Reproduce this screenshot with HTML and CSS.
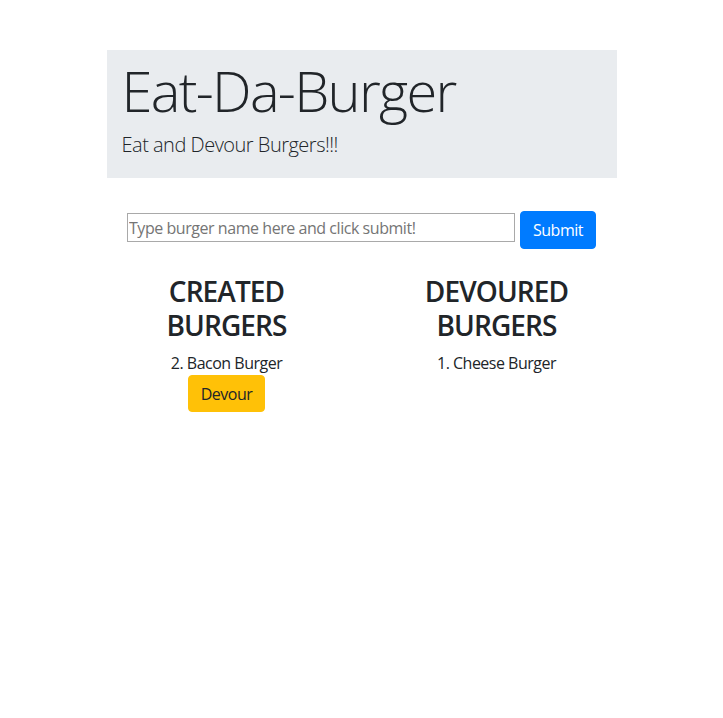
FILE: index.html
```html
<!DOCTYPE html>
<html lang="en">
<head>
<meta charset="utf-8">
<title>Eat-Da-Burger</title>
<link rel="stylesheet" href="styles.css">
</head>
<body>
<div class="container">
  <div class="jumbotron">
    <h1 class="title">Eat-Da-Burger</h1>
    <p class="lead">Eat and Devour Burgers!!!</p>
  </div>
  <form class="add-form">
    <input class="burger-input" type="text" placeholder="Type burger name here and click submit!">
    <button class="btn btn-primary" type="button">Submit</button>
  </form>
  <div class="row">
    <div class="col">
      <h3 class="col-title">CREATED BURGERS</h3>
      <div class="burger">2. Bacon Burger</div>
      <button class="btn btn-warning" type="button">Devour</button>
    </div>
    <div class="col">
      <h3 class="col-title">DEVOURED BURGERS</h3>
      <div class="burger">1. Cheese Burger</div>
    </div>
  </div>
</div>
</body>
</html>
```

FILE: styles.css
```css
* { box-sizing: border-box; }
body {
  margin: 0;
  font-family: "Open Sans", "Noto Sans", sans-serif;
  font-size: 16px;
  line-height: 1.5;
  letter-spacing: -0.5px;
  color: #212529;
  background: #fff;
}
.container {
  width: 540px;
  margin: 0 auto;
  padding: 50px 15px 0;
}
.jumbotron {
  background: #e9ecef;
  padding: 7px 15px 18px;
  margin-bottom: 32px;
}
.title {
  margin: 0 0 6px;
  font-size: 56px;
  font-weight: 300;
  line-height: 1.2;
  letter-spacing: -1.7px;
}
.lead {
  margin: 0;
  font-size: 20px;
  font-weight: 300;
  line-height: 1.5;
  letter-spacing: -0.5px;
}
.add-form {
  display: flex;
  justify-content: center;
  align-items: flex-start;
  gap: 5px;
  margin: 0 0 25px;
  padding-top: 1px;
}
.burger-input {
  width: 388px;
  height: 29px;
  margin-top: 2px;
  border: 1px solid #a9a9a9;
  padding: 1px 1px;
  font-family: inherit;
  font-size: 16px;
  letter-spacing: -0.45px;
  color: #212529;
}
.burger-input::placeholder { color: #757575; }
.btn {
  display: inline-block;
  font-family: inherit;
  font-size: 16px;
  line-height: 1.5;
  letter-spacing: -0.5px;
  padding: 6px 12px;
  border: 1px solid transparent;
  border-radius: 4px;
  cursor: pointer;
}
.btn-primary {
  width: 76px;
  height: 38px;
  background: #007bff;
  border-color: #007bff;
  color: #fff;
}
.btn-warning {
  width: 77px;
  height: 37px;
  padding: 5px 0;
  background: #ffc107;
  border-color: #ffc107;
  color: #212529;
}
.row {
  display: flex;
  margin: 0 -15px;
}
.col {
  flex: 1 1 0;
  padding: 0 15px;
  text-align: center;
}
.col-title {
  margin: 0 0 9px;
  padding-top: 1px;
  font-size: 28px;
  font-weight: 600;
  line-height: 1.2;
  letter-spacing: -0.9px;
}
.burger { line-height: 24px; }
```
